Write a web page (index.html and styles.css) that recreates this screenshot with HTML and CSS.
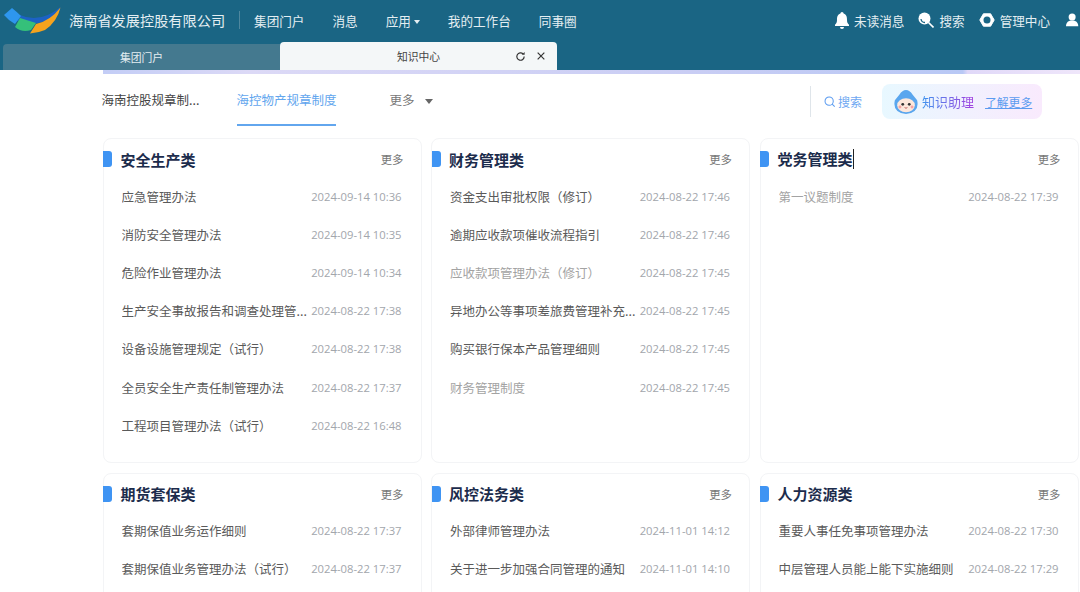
FILE: index.html
```html
<!DOCTYPE html>
<html lang="zh-CN">
  <head>
    <meta charset="UTF-8" />
    <title>知识中心</title>
    <link rel="stylesheet" href="styles.css">
  </head>
  <body>
    <header class="topbar">
      <div class="nav-row">
        <svg class="logo" viewBox="0 0 62 40" width="62" height="40">
          <path d="M20 15 Q40 24 60.5 7 Q55 20 38 23 Q26 24 17 21Z" fill="#1c62c4"/>
          <path d="M4 15 L12 8 Q17 12 21 16 L15 24 Q8 20 4 15Z" fill="#2e96ee"/>
          <path d="M20 18 L36 23 L31 30 Q22 33 15 27Z" fill="#35c07a"/>
          <path d="M30 33.5 L36 24 Q50 21 60.5 7.5 Q57 22 45 30 Q38 33 30 33.5Z" fill="#f5a31e"/>
        </svg>
        <span class="company">海南省发展控股有限公司</span>
        <nav class="main-nav">
          <a>集团门户</a>
          <a>消息</a>
          <a>应用<i class="caret"></i></a>
          <a>我的工作台</a>
          <a>同事圈</a>
        </nav>
        <div class="user-nav">
          <a>
            <svg viewBox="0 0 14 17" width="14" height="17"><path d="M7 0a1.6 1.6 0 0 1 1.6 1.6C11.5 2.6 12 5 12 8c0 2.2.6 3.6 2 4.8V14H0v-1.2C1.4 11.6 2 10.2 2 8c0-3 .5-5.4 3.4-6.4A1.6 1.6 0 0 1 7 0zM5 15h4a2 2 0 0 1-4 0z" fill="#fff"/></svg>
            未读消息
          </a>
          <a>
            <svg viewBox="0 0 16 16" width="16" height="16"><circle cx="6.5" cy="6.5" r="6" fill="#fff"/><path d="M3 7a4 4 0 0 0 4 3.5" stroke="#1a6584" stroke-width="1.3" fill="none"/><path d="M10.5 10.5l5 5" stroke="#fff" stroke-width="1.6"/></svg>
            搜索
          </a>
          <a>
            <svg viewBox="0 0 16 16" width="16" height="16"><path d="M.8 8L4.4 1.8h7.2L15.2 8l-3.600 6.200H4.400z" fill="#fff" stroke="#fff" stroke-linejoin="round"/><circle cx="8" cy="8" r="3.5" fill="#1a6584"/></svg>
            管理中心
          </a>
          <a class="user-cut">
            <svg viewBox="0 0 16 16" width="16" height="16"><circle cx="7" cy="4.5" r="4" fill="#fff"/><path d="M0 15c0-4.500 3-6.500 7-6.500s7 2 7 6.500z" fill="#fff"/></svg>
          </a>
        </div>
      </div>
      <div class="tab-row">
        <div class="tab">集团门户</div>
        <div class="tab tab-active">
          <span>知识中心</span>
          <svg class="tab-icon reload" viewBox="0 0 12 12" width="11" height="11"><path d="M10 6a4 4 0 1 1-1.200-2.800" stroke="#333" stroke-width="1.300" fill="none"/><path d="M10.500 1v3.200H7.300z" fill="#333"/></svg>
          <svg class="tab-icon close" viewBox="0 0 12 12" width="10" height="10"><path d="M2 2l8 8M10 2l-8 8" stroke="#333" stroke-width="1.4"/></svg>
        </div>
      </div>
    </header>
    <div class="banner-strip"></div>

    <main class="content">
      <div class="toolbar">
        <div class="tabs">
          <a class="sub-tab first">海南控股规章制...</a>
          <a class="sub-tab current">海控物产规章制度</a>
          <a class="sub-tab more">更多<i class="caret gray"></i></a>
        </div>
        <div class="tools">
          <a class="search-link">
            <svg viewBox="0 0 14 14" width="12" height="12"><circle cx="6" cy="6" r="4.8" stroke="#5b9bf0" stroke-width="1.2" fill="none"/><path d="M9.500 9.500l3 3" stroke="#5b9bf0" stroke-width="1.2"/></svg>
            搜索
          </a>
          <div class="assistant">
            <svg viewBox="0 0 28 28" width="26" height="26">
              <path d="M14 1 Q18 1 21 6 L26 12 Q29 25 14 27 Q-1 25 2 12 L7 6 Q10 1 14 1Z" fill="#5aa6ee"/>
              <ellipse cx="14" cy="17.5" rx="9.500" ry="7.5" fill="#fde8dc"/>
              <circle cx="10.5" cy="16.5" r="1.5" fill="#333"/>
              <circle cx="17.5" cy="16.5" r="1.5" fill="#333"/>
              <circle cx="7.5" cy="19.5" r="1.6" fill="#f6a3a3"/>
              <circle cx="20.5" cy="19.5" r="1.6" fill="#f6a3a3"/>
              <path d="M12.500 20q1.500 1.400 3 0" stroke="#b55" stroke-width="1" fill="none"/>
            </svg>
            <span class="assistant-name">知识助理</span>
            <a class="learn-more">了解更多</a>
          </div>
        </div>
      </div>

      <div class="grid">
        <section class="card">
          <div class="card-head"><i class="mark"></i><h2>安全生产类</h2><a class="card-more">更多</a></div>
          <ul>
            <li><span class="doc">应急管理办法</span><time>2024-09-14 10:36</time></li>
            <li><span class="doc">消防安全管理办法</span><time>2024-09-14 10:35</time></li>
            <li><span class="doc">危险作业管理办法</span><time>2024-09-14 10:34</time></li>
            <li><span class="doc">生产安全事故报告和调查处理管...</span><time>2024-08-22 17:38</time></li>
            <li><span class="doc">设备设施管理规定（试行）</span><time>2024-08-22 17:38</time></li>
            <li><span class="doc">全员安全生产责任制管理办法</span><time>2024-08-22 17:37</time></li>
            <li><span class="doc">工程项目管理办法（试行）</span><time>2024-08-22 16:48</time></li>
          </ul>
        </section>
        <section class="card">
          <div class="card-head"><i class="mark"></i><h2>财务管理类</h2><a class="card-more">更多</a></div>
          <ul>
            <li><span class="doc">资金支出审批权限（修订）</span><time>2024-08-22 17:46</time></li>
            <li><span class="doc">逾期应收款项催收流程指引</span><time>2024-08-22 17:46</time></li>
            <li><span class="doc faded">应收款项管理办法（修订）</span><time>2024-08-22 17:45</time></li>
            <li><span class="doc">异地办公等事项差旅费管理补充...</span><time>2024-08-22 17:45</time></li>
            <li><span class="doc">购买银行保本产品管理细则</span><time>2024-08-22 17:45</time></li>
            <li><span class="doc faded">财务管理制度</span><time>2024-08-22 17:45</time></li>
          </ul>
        </section>
        <section class="card">
          <div class="card-head"><i class="mark"></i><h2 class="with-cursor">党务管理类</h2><a class="card-more">更多</a></div>
          <ul>
            <li><span class="doc faded">第一议题制度</span><time>2024-08-22 17:39</time></li>
          </ul>
        </section>
        <section class="card">
          <div class="card-head"><i class="mark"></i><h2>期货套保类</h2><a class="card-more">更多</a></div>
          <ul>
            <li><span class="doc">套期保值业务运作细则</span><time>2024-08-22 17:37</time></li>
            <li><span class="doc">套期保值业务管理办法（试行）</span><time>2024-08-22 17:37</time></li>
          </ul>
        </section>
        <section class="card">
          <div class="card-head"><i class="mark"></i><h2>风控法务类</h2><a class="card-more">更多</a></div>
          <ul>
            <li><span class="doc">外部律师管理办法</span><time>2024-11-01 14:12</time></li>
            <li><span class="doc">关于进一步加强合同管理的通知</span><time>2024-11-01 14:10</time></li>
          </ul>
        </section>
        <section class="card">
          <div class="card-head"><i class="mark"></i><h2>人力资源类</h2><a class="card-more">更多</a></div>
          <ul>
            <li><span class="doc">重要人事任免事项管理办法</span><time>2024-08-22 17:30</time></li>
            <li><span class="doc">中层管理人员能上能下实施细则</span><time>2024-08-22 17:29</time></li>
          </ul>
        </section>
      </div>
    </main>
  </body>
</html>
```
FILE: styles.css
```css
*,
*::before,
*::after {
  box-sizing: border-box;
  margin: 0;
  padding: 0;
}
html,
body {
  height: 592px;
  overflow: hidden;
}
body {
  background: #fff;
  font-family: "Noto Sans CJK SC", "Liberation Sans", sans-serif;
  color: #444;
}
a {
  cursor: pointer;
}

/* top bar */
.topbar {
  height: 70px;
  background: #1a6584;
}
.nav-row {
  display: flex;
  align-items: center;
  height: 40px;
  white-space: nowrap;
  overflow: hidden;
}
.logo {
  flex: none;
  margin-right: 7px;
}
.company {
  font-size: 14.2px;
  color: #e4eef2;
  padding-right: 14px;
  border-right: 1px solid #4f879e;
  line-height: 18px;
}
.main-nav {
  display: flex;
  gap: 28px;
  margin-left: 14px;
  font-size: 12.6px;
  color: #e4eef2;
}
.caret {
  display: inline-block;
  margin-left: 3px;
  vertical-align: middle;
  border: 3.5px solid transparent;
  border-top: 4px solid #e4eef2;
  border-bottom: 0;
}
.user-nav {
  display: flex;
  align-items: center;
  gap: 14px;
  margin-left: auto;
  font-size: 12.6px;
  color: #e4eef2;
}
.user-nav a {
  display: flex;
  align-items: center;
  gap: 5px;
}
.user-nav .user-cut {
  width: 14px;
  margin-left: 2px;
  overflow: hidden;
}
.tab-row {
  display: flex;
  align-items: flex-end;
  height: 30px;
  padding-left: 3px;
}
.tab {
  width: 277px;
  height: 26px;
  display: flex;
  align-items: center;
  justify-content: center;
  font-size: 10.8px;
  color: #e4eef2;
  background: #44798f;
  border-radius: 4px 0 0 0;
}
.tab-active {
  position: relative;
  height: 28px;
  background: #f4f7f8;
  color: #444;
  border-radius: 4px 4px 0 0;
}
.tab-icon {
  position: absolute;
  top: 9px;
}
.reload {
  right: 31px;
}
.close {
  right: 11px;
}
.banner-strip {
  height: 4px;
  margin-left: 103px;
  background: linear-gradient(90deg, #c3cdf6, #dcd9f6 15%, #c9cdf4 60%, #b8c8f5 88%, #e0d8f8 88.5%, #efe6fa);
}

/* toolbar */
.content {
  padding-left: 102.5px;
}
.toolbar {
  display: flex;
  justify-content: space-between;
  width: 940.5px;
  height: 64px;
  margin-left: -1px;
}
.tabs {
  display: flex;
  font-size: 12.5px;
  white-space: nowrap;
}
.sub-tab {
  height: 52px;
  line-height: 52px;
  color: #444;
}
.first {
  width: 135px;
}
.current {
  width: 99px;
  color: #62a6ee;
  border-bottom: 2px solid #62a6ee;
}
.more {
  margin-left: 54px;
  color: #777;
}
.caret.gray {
  margin-left: 10px;
  border-top-color: #666;
  border-width: 4.5px;
  border-top-width: 5px;
  border-bottom: 0;
}
.tools {
  display: flex;
  align-items: center;
  height: 35px;
  margin-top: 10px;
  font-size: 12px;
}
.search-link {
  display: flex;
  align-items: center;
  gap: 2px;
  height: 31px;
  padding-left: 13px;
  border-left: 1px solid #dfe5ea;
  color: #6ea8f2;
}
.assistant {
  display: flex;
  align-items: center;
  width: 160px;
  height: 35px;
  margin-left: 20px;
  padding-left: 11px;
  border-radius: 8px;
  background: linear-gradient(90deg, #e8f8ff, #f9eafd);
}
.assistant-name {
  margin-left: 3px;
  font-size: 13px;
  background: linear-gradient(90deg, #3f94ee, #a43fe0);
  -webkit-background-clip: text;
  background-clip: text;
  color: transparent;
}
.learn-more {
  margin-left: 11px;
  font-size: 11.8px;
  color: #5b9bf0;
  text-decoration: underline;
}

/* cards */
.grid {
  display: grid;
  grid-template-columns: repeat(3, 319px);
  grid-template-rows: 325px 325px;
  gap: 9.5px;
}
.card {
  padding-right: 19px;
  border: 1px solid #f3f4f6;
  border-radius: 8px;
}
.card-head {
  position: relative;
  display: flex;
  align-items: center;
  height: 36px;
  margin: 2px -2px 0 0;
  padding-left: 17px;
}
.mark {
  position: absolute;
  left: -0.5px;
  top: 10px;
  width: 9px;
  height: 16px;
  background: #3f94f3;
  border-radius: 0 3px 3px 0;
}
h2 {
  font-size: 15px;
  font-weight: 700;
  color: #1c2c4c;
}
.with-cursor {
  border-right: 1px solid #222;
  line-height: 20px;
}
.card-more {
  margin-left: auto;
  font-size: 11.4px;
  color: #777;
}
ul {
  list-style: none;
}
li {
  display: flex;
  justify-content: space-between;
  align-items: center;
  height: 38.2px;
  padding-left: 18px;
}
.doc {
  width: 190px;
  font-size: 12.5px;
  color: #5a5a5a;
  white-space: nowrap;
  overflow: hidden;
}
.faded {
  color: #a3a3a3;
}
time {
  font-family: "Open Sans", "Liberation Sans", sans-serif;
  font-size: 11.25px;
  color: #a2a6ac;
  white-space: nowrap;
}
```
